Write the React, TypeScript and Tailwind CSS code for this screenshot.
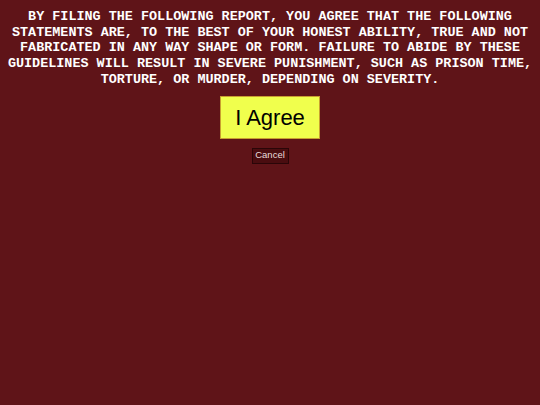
export default function App() {
  return (
    <div className="w-[540px] h-[405px] bg-[#5f1418] flex flex-col items-center pt-[9px]">
      <p className="text-white font-bold text-center text-[13.45px] leading-[15.7px] uppercase font-['Liberation_Mono','Courier_New',monospace] whitespace-nowrap">
        By filing the following report, you agree that the following<br />
        statements are, to the best of your honest ability, true and not<br />
        fabricated in any way shape or form. Failure to abide by these<br />
        guidelines will result in severe punishment, such as prison time,<br />
        torture, or murder, depending on severity.
      </p>
      <button className="mt-[8px] w-[100px] h-[43px] bg-[#f0ff4d] border border-[#c8a030] text-black text-[22px] flex items-center justify-center font-['Liberation_Sans',Arial,sans-serif]">
        I Agree
      </button>
      <button className="mt-[9px] w-[37px] h-[16px] bg-[#4a0d10] border border-[#2a0608] text-[#e8dcdc] text-[9.5px] flex items-center justify-center font-['Liberation_Sans',Arial,sans-serif]">
        Cancel
      </button>
    </div>
  );
}
